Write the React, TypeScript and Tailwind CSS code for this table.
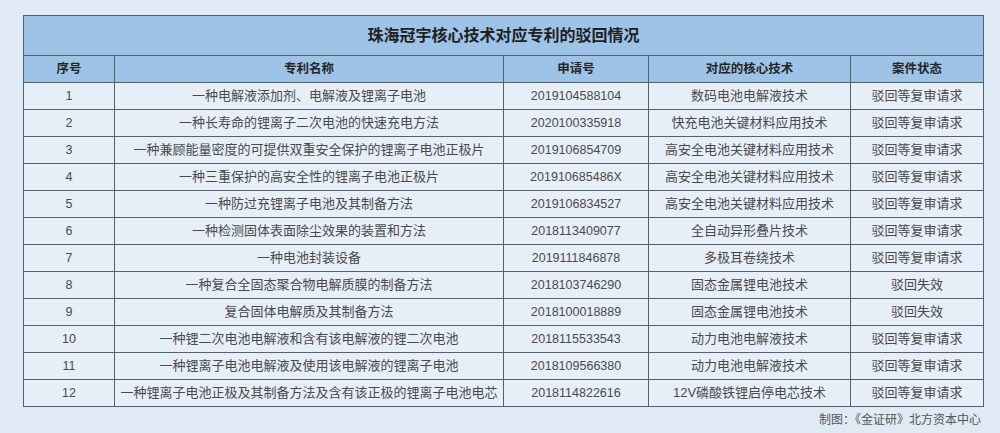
import React from "react";

type Row = { no: number; name: string; appNo: string; tech: string; status: string };

const rows: Row[] = [
    { no: 1, name: "一种电解液添加剂、电解液及锂离子电池", appNo: "2019104588104", tech: "数码电池电解液技术", status: "驳回等复审请求" },
    { no: 2, name: "一种长寿命的锂离子二次电池的快速充电方法", appNo: "2020100335918", tech: "快充电池关键材料应用技术", status: "驳回等复审请求" },
    { no: 3, name: "一种兼顾能量密度的可提供双重安全保护的锂离子电池正极片", appNo: "2019106854709", tech: "高安全电池关键材料应用技术", status: "驳回等复审请求" },
    { no: 4, name: "一种三重保护的高安全性的锂离子电池正极片", appNo: "201910685486X", tech: "高安全电池关键材料应用技术", status: "驳回等复审请求" },
    { no: 5, name: "一种防过充锂离子电池及其制备方法", appNo: "2019106834527", tech: "高安全电池关键材料应用技术", status: "驳回等复审请求" },
    { no: 6, name: "一种检测固体表面除尘效果的装置和方法", appNo: "2018113409077", tech: "全自动异形叠片技术", status: "驳回等复审请求" },
    { no: 7, name: "一种电池封装设备", appNo: "2019111846878", tech: "多极耳卷绕技术", status: "驳回等复审请求" },
    { no: 8, name: "一种复合全固态聚合物电解质膜的制备方法", appNo: "2018103746290", tech: "固态金属锂电池技术", status: "驳回失效" },
    { no: 9, name: "复合固体电解质及其制备方法", appNo: "2018100018889", tech: "固态金属锂电池技术", status: "驳回失效" },
    { no: 10, name: "一种锂二次电池电解液和含有该电解液的锂二次电池", appNo: "2018115533543", tech: "动力电池电解液技术", status: "驳回等复审请求" },
    { no: 11, name: "一种锂离子电池电解液及使用该电解液的锂离子电池", appNo: "2018109566380", tech: "动力电池电解液技术", status: "驳回等复审请求" },
    { no: 12, name: "一种锂离子电池正极及其制备方法及含有该正极的锂离子电池电芯", appNo: "2018114822616", tech: "12V磷酸铁锂启停电芯技术", status: "驳回等复审请求" },
];

const cell = "border border-[#55606c] text-center p-0 whitespace-nowrap";

const App: React.FC = () => {
    return (
        <div
            className="w-[1000px] h-[433px] bg-[#dfeaf5] overflow-hidden"
            style={{ fontFamily: '"Liberation Sans", "Noto Sans CJK SC", sans-serif' }}
        >
            <div className="pt-[15px] pl-[23px]">
                <table className="border-collapse w-[960px] table-fixed border border-[#45505c] text-[13px] text-[#4a4a4a]">
                    <colgroup>
                        <col className="w-[91px]" />
                        <col className="w-[389px]" />
                        <col className="w-[145px]" />
                        <col className="w-[202px]" />
                        <col className="w-[133px]" />
                    </colgroup>
                    <thead>
                        <tr className="h-[40px] bg-[#9dc3e6]">
                            <th colSpan={5} className={`${cell} text-[16px] font-bold text-[#1f1f1f]`}>
                                珠海冠宇核心技术对应专利的驳回情况
                            </th>
                        </tr>
                        <tr className="h-[27px] bg-[#9dc3e6] text-[12.5px] font-bold text-[#262626]">
                            <th className={cell}>序号</th>
                            <th className={cell}>专利名称</th>
                            <th className={cell}>申请号</th>
                            <th className={cell}>对应的核心技术</th>
                            <th className={cell}>案件状态</th>
                        </tr>
                    </thead>
                    <tbody className="bg-[#e6eef8]">
                        {rows.map((r) => (
                            <tr key={r.no} className="h-[27px]">
                                <td className={`${cell} text-[12.5px]`}>{r.no}</td>
                                <td className={cell}>{r.name}</td>
                                <td className={`${cell} text-[12.5px]`}>{r.appNo}</td>
                                <td className={cell}>{r.tech}</td>
                                <td className={cell}>{r.status}</td>
                            </tr>
                        ))}
                    </tbody>
                </table>
                <div className="w-[960px] text-right text-[12px] text-[#555] mt-[4px] pr-[2px]">
                    制图：《金证研》北方资本中心
                </div>
            </div>
        </div>
    );
};

export default App;
